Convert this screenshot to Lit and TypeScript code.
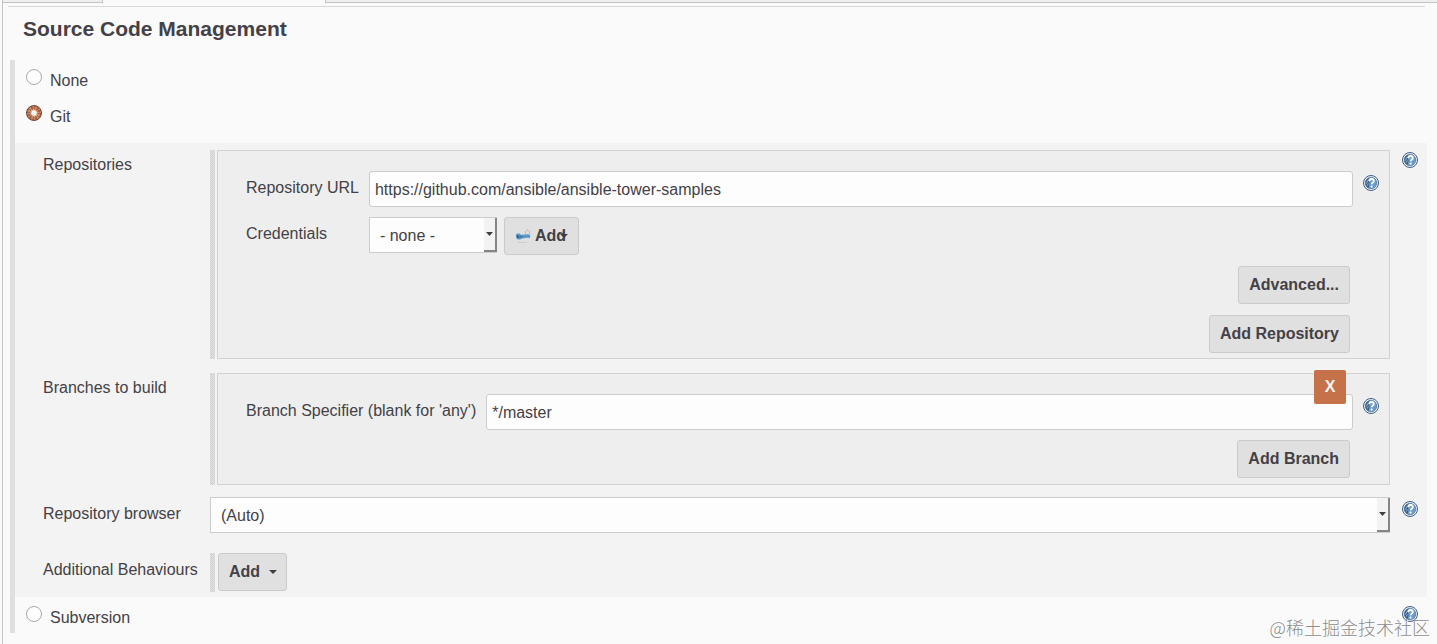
import { LitElement, html, css } from "lit";
import { customElement, property, state } from "lit/decorators.js";

@customElement("help-icon")
class HelpIcon extends LitElement {
  static styles = css`
    :host { display: block; width: 16px; height: 16px; }
    .link { display: block; width: 16px; height: 16px; }
    svg { display: block; }
  `;
  render() {
    return html`<a class="link" href="#help" aria-label="Help">
      <svg width="16" height="16" viewBox="0 0 16 16">
        <circle cx="8" cy="8" r="7.5" fill="#f4f7fa" stroke="#3f5f84" stroke-width="1" />
        <circle cx="8" cy="8" r="5.8" fill="#6b9ccb" stroke="#3c6592" stroke-width="0.6" />
        <path d="M2.500 8A5.500 5.500 0 0 1 6.800 2.700L5.400 5.400 6.600 8.200 5.600 12.900A5.500 5.500 0 0 1 2.500 8Z" fill="#3a5f8a" />
        <path d="M3.300 8.600 5.300 4.800M4.200 10.600 5.400 8.400" stroke="#b4cbe2" stroke-width="0.8" fill="none" />
        <path d="M6.300 6.100C6.400 4.600 7.400 4 8.500 4c1.300 0 2.300.8 2.300 2 0 1.600-2.100 1.700-2.100 3.300" fill="none" stroke="#fff" stroke-width="1.800" />
        <circle cx="8.600" cy="11.600" r="1.100" fill="#fff" />
      </svg>
    </a>`;
  }
}

@customElement("select-box")
class SelectBox extends LitElement {
  @property() label = "";
  @property() option = "";
  static styles = css`
    :host { display: grid; }
    .select, .arrow { grid-area: 1 / 1; }
    .select {
      appearance: none;
      box-sizing: border-box;
      width: 100%;
      height: 36px;
      margin: 0;
      padding: 0 18px 0 10px;
      border: 1px solid #ccc;
      border-radius: 0;
      background: #fdfdfd;
      color: #444146;
      font: 16px "Liberation Sans", Arial, sans-serif;
    }
    .arrow {
      justify-self: end;
      box-sizing: border-box;
      width: 13px;
      height: 34px;
      margin: 1px 0 1px 0;
      display: grid;
      place-items: center;
      background: #f3f3f3;
      border-right: 2px solid #858585;
      border-bottom: 2px solid #858585;
      pointer-events: none;
    }
  `;
  render() {
    return html`<select class="select" aria-label=${this.label}><option>${this.option}</option></select>
      <span class="arrow"><svg width="7" height="4" viewBox="0 0 7 4"><path d="M0 0h7L3.500 4z" fill="#3e3e42" /></svg></span>`;
  }
}

@customElement("app-root")
class AppRoot extends LitElement {
  @state() scm = "git";

  static styles = css`
    :host {
      display: block;
      position: relative;
      min-height: 100vh;
      background: #fafafa;
      color: #444146;
      font: 16px/20px "Liberation Sans", Arial, sans-serif;
    }
    .page { box-sizing: border-box; min-height: 100vh; margin-left: 2px; border-left: 1px solid #c4c4c4; }
    .tabs { display: grid; grid-template-columns: 100px 222px 1fr; height: 3px; }
    .tab { background: #efefef; border: 1px solid #c4c4c4; border-top: 0; border-left: 0; }
    .tab.last { border-left: 1px solid #c4c4c4; border-right: 0; }
    .rule { height: 1px; margin: 3px 12px 0 5px; background: #d9d9d9; }
    .title { margin: 9px 0 0 20px; font-size: 21px; line-height: 26px; font-weight: bold; }
    .scm { margin: 18px 10px 0 7px; border-left: 5px solid #dfdfdf; }
    .choice { display: flex; align-items: flex-start; gap: 8px; height: 36px; padding: 0 9px 0 11px; }
    .choice label { padding-top: 11px; flex: 1; }
    .choice help-icon { margin-top: 9px; }
    .radio {
      appearance: none;
      box-sizing: border-box;
      width: 16px;
      height: 16px;
      margin: 9px 0 0;
      border: 1px solid #a9a9a9;
      border-radius: 50%;
      background: #fdfdfd;
    }
    .radio:checked {
      border-color: #6b4237;
      background:
        radial-gradient(circle, #fffaf4 0 2px, #fffaf400 4px),
        repeating-conic-gradient(#a9603f 0 15deg, #c98a68 15deg 30deg);
    }
    .panel { margin-top: 11px; padding: 7px 9px 5px 28px; background: #f3f3f3; }
    .row { display: grid; grid-template-columns: 157px minmax(0, 1fr) 16px; column-gap: 12px; margin-bottom: 20px; }
    .row > :nth-child(2) { margin-left: -2px; }
    .row.tall { margin-bottom: 14px; }
    .row.branches { margin-bottom: 12px; }
    .row:last-child { margin-bottom: 0; }
    .name { line-height: 34px; white-space: nowrap; }
    .tall > .name { line-height: 30px; }
    .hint { margin-top: 4px; }
    .tall > .hint { margin-top: 2px; }
    .chunk { display: flex; gap: 2px; }
    .handle {
      flex: none;
      width: 5px;
      background: repeating-conic-gradient(#d0d0d0 0 25%, #e2e2e2 0 50%) 0 0 / 2px 2px;
    }
    .box { position: relative; flex: 1; min-width: 0; border: 1px solid #d2d2d2; background: #eee; padding: 20px 10px 5px 28px; }
    .fields { display: grid; grid-template-columns: auto minmax(0, 1fr) 16px; gap: 10px; }
    .input {
      box-sizing: border-box;
      width: 100%;
      height: 36px;
      margin: 0;
      padding: 1px 5px 0;
      border: 1px solid #ccc;
      border-radius: 3px;
      background: #fdfdfd;
      color: inherit;
      font: inherit;
    }
    .inline { display: flex; align-items: flex-start; gap: 7px; grid-column: 2 / 4; }
    .credentials { width: 128px; }
    .button {
      box-sizing: border-box;
      height: 38px;
      margin: 0;
      padding: 0 10px;
      display: flex;
      align-items: center;
      border: 1px solid #cbcbcb;
      border-radius: 3px;
      background: #e0e0e0;
      color: inherit;
      font: bold 16px/20px "Liberation Sans", Arial, sans-serif;
    }
    .key { margin-right: 4px; }
    .crowded { display: flex; margin-left: -6px; }
    .menu { gap: 9px; padding-right: 9px; }
    .actions { display: flex; flex-direction: column; align-items: flex-end; gap: 11px; margin: 11px 29px 0 0; }
    .branches .actions { margin-top: 10px; padding-bottom: 1px; }
    .remove {
      position: absolute;
      top: -4px;
      right: 43px;
      width: 32px;
      height: 34px;
      padding: 0;
      border: 0;
      border-radius: 2px;
      background: #c5714a;
      color: #fbf3ee;
      font: bold 16px "Liberation Sans", Arial, sans-serif;
    }
    .behaviours { gap: 3px; padding: 0; }
    .behaviours .handle { height: 39px; }
    .watermark {
      position: absolute;
      right: 7px;
      bottom: 5px;
      color: #8c8c8c;
      font: 300 18px/24px "Noto Sans CJK SC", sans-serif;
      text-shadow: 1px 1px 0 #fff;
      pointer-events: none;
    }
  `;

  caret() {
    return html`<svg width="8" height="4" viewBox="0 0 8 4"><path d="M0 0h8L4 4z" fill="#3e3e42" /></svg>`;
  }

  choice(id: string, text: string, help = false) {
    return html`<div class="choice">
      <input class="radio" type="radio" name="scm" id=${id} .checked=${this.scm === id} @change=${() => (this.scm = id)} />
      <label for=${id}>${text}</label>
      ${help ? html`<help-icon></help-icon>` : ""}
    </div>`;
  }

  render() {
    return html`<main class="page">
        <div class="tabs"><span class="tab"></span><span></span><span class="tab last"></span></div>
        <div class="rule"></div>
        <h1 class="title">Source Code Management</h1>
        <section class="scm">
          ${this.choice("none", "None")} ${this.choice("git", "Git")}
          <div class="panel">
            <div class="row tall">
              <span class="name">Repositories</span>
              <div class="chunk">
                <span class="handle"></span>
                <div class="box">
                  <div class="fields">
                    <label class="name" for="url">Repository URL</label>
                    <input class="input" id="url" type="text" value="https://github.com/ansible/ansible-tower-samples" />
                    <help-icon class="hint"></help-icon>
                    <span class="name">Credentials</span>
                    <div class="inline">
                      <select-box class="credentials" label="Credentials" option="- none -"></select-box>
                      <button class="button" type="button">
                        <svg class="key" width="16" height="16" viewBox="0 0 16 16">
                          <path d="M3 14.500h9" stroke="#c9cdd0" stroke-width="1" />
                          <path d="M1 6.500C2 5 4.500 5 6 6.800L13.500 6.200 15.200 7.200 15 10 12 9.800 7 10.400C5.500 12 2.500 12 1.200 10Z" fill="#5a97c8" />
                          <path d="M1.500 7 4.500 9.200 7.500 8.400" stroke="#35658f" stroke-width="1" fill="none" />
                          <circle cx="2.800" cy="8.800" r="1" fill="#284e73" />
                          <path d="M10.500 5.500V3.500L12.500 2 14.500 3.500V5.500" stroke="#c98585" stroke-width="1" stroke-dasharray="1 1" fill="none" />
                        </svg>
                        Add<span class="crowded">${this.caret()}</span>
                      </button>
                    </div>
                  </div>
                  <div class="actions">
                    <button class="button" type="button">Advanced...</button>
                    <button class="button" type="button">Add Repository</button>
                  </div>
                </div>
              </div>
              <help-icon class="hint"></help-icon>
            </div>
            <div class="row tall branches">
              <span class="name">Branches to build</span>
              <div class="chunk">
                <span class="handle"></span>
                <div class="box">
                  <div class="fields">
                    <label class="name" for="branch">Branch Specifier (blank for 'any')</label>
                    <input class="input" id="branch" type="text" value="*/master" />
                    <help-icon class="hint"></help-icon>
                  </div>
                  <div class="actions"><button class="button" type="button">Add Branch</button></div>
                  <button class="remove" type="button">X</button>
                </div>
              </div>
            </div>
            <div class="row">
              <span class="name">Repository browser</span>
              <select-box label="Repository browser" option="(Auto)"></select-box>
              <help-icon class="hint"></help-icon>
            </div>
            <div class="row">
              <span class="name">Additional Behaviours</span>
              <div class="chunk behaviours">
                <span class="handle"></span>
                <button class="button menu" type="button">Add ${this.caret()}</button>
              </div>
            </div>
          </div>
          ${this.choice("subversion", "Subversion", true)}
        </section>
      </main>
      <div class="watermark">@稀土掘金技术社区</div>`;
  }
}
